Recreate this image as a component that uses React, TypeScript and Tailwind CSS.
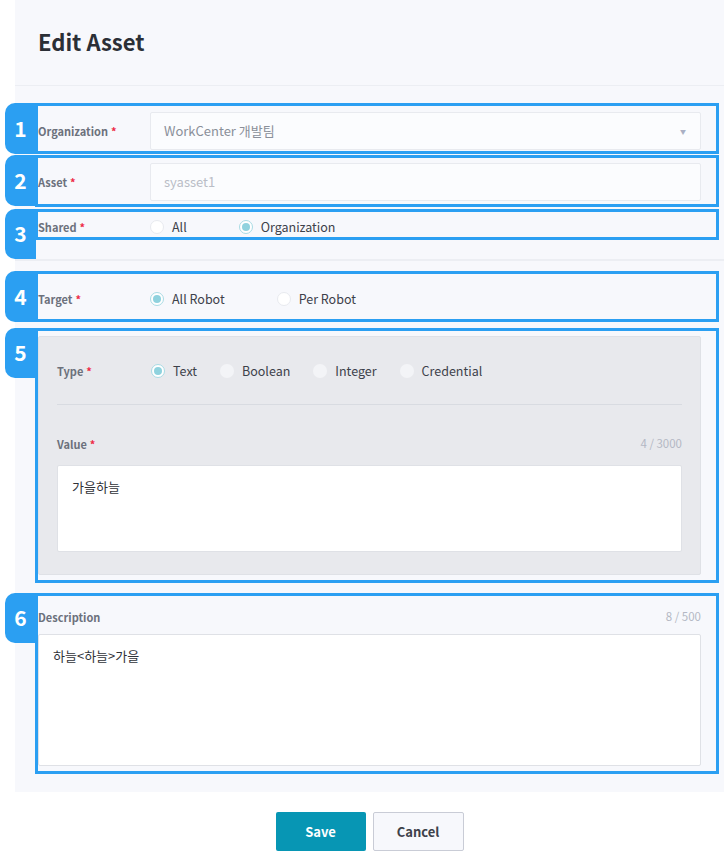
import React from "react";

const font = { fontFamily: '"Noto Sans CJK KR", "Noto Sans", sans-serif' };

function Req() {
  return <span className="ml-[3px] text-[#ee2b47]">*</span>;
}

function Radio({ checked, muted }: { checked?: boolean; muted?: boolean }) {
  if (checked) {
    return (
      <span className="flex h-[14px] w-[14px] shrink-0 items-center justify-center rounded-full border border-[#a9dbe4] bg-white">
        <span className="h-[8px] w-[8px] rounded-full bg-[#8fd2de]" />
      </span>
    );
  }
  return (
    <span
      className={
        muted
          ? "h-[14px] w-[14px] shrink-0 rounded-full bg-[#f3f4f7]"
          : "h-[14px] w-[14px] shrink-0 rounded-full border border-[#e8eaef] bg-white"
      }
    />
  );
}

function Option({ label, checked, muted, gap }: { label: string; checked?: boolean; muted?: boolean; gap: string }) {
  return (
    <label className={`flex items-center ${gap}`}>
      <Radio checked={checked} muted={muted} />
      <span className="ml-[8px] text-[12.5px] text-[#3d414a]">{label}</span>
    </label>
  );
}

function Annot({ box, badge, n }: { box: string; badge: string; n: number }) {
  return (
    <>
      <div className={`pointer-events-none absolute left-[35px] w-[684px] border-[3px] border-[#2b9ff2] ${box}`} />
      <div
        className={`pointer-events-none absolute left-[5px] flex w-[31px] items-center justify-center rounded-l-[10px] bg-[#2b9ff2] text-[21px] font-bold text-white ${badge}`}
      >
        {n}
      </div>
    </>
  );
}

export default function App() {
  return (
    <div className="relative min-h-[865px] w-[724px] bg-white" style={font}>
      <div className="ml-[15px] bg-[#f7f8fc]">
        {/* Header */}
        <div className="flex h-[86px] items-center border-b border-[#eceef3] pb-[2px] pl-[23px]">
          <h1 className="text-[22px] font-bold text-[#2b2f36]">Edit Asset</h1>
        </div>

        {/* Section 1 */}
        <div className="border-b-2 border-[#eceef3] px-[23px] pb-[22px] pt-[26px]">
          <div className="flex h-[38px] items-center">
            <div className="w-[112px] text-[11px] font-bold text-[#6c717c]">
              Organization
              <Req />
            </div>
            <div className="flex h-[38px] flex-1 items-center justify-between rounded-[2px] border border-[#e8eaef] bg-[#fbfcfe] pl-[13px] pr-[14px]">
              <span className="text-[13px] text-[#8a8f99]">WorkCenter 개발팀</span>
              <span className="text-[6px] text-[#aab0c4]">▼</span>
            </div>
          </div>
          <div className="mt-[13px] flex h-[38px] items-center">
            <div className="w-[112px] text-[11px] font-bold text-[#6c717c]">
              Asset
              <Req />
            </div>
            <div className="flex h-[38px] flex-1 items-center rounded-[2px] border border-[#e8eaef] bg-[#fbfcfe] pl-[13px]">
              <span className="text-[13px] text-[#b9bdc6]">syasset1</span>
            </div>
          </div>
          <div className="mt-[16px] flex h-[20px] items-center">
            <div className="w-[112px] text-[11px] font-bold text-[#6c717c]">
              Shared
              <Req />
            </div>
            <Option label="All" gap="mr-[52px]" />
            <Option label="Organization" checked gap="mr-[52px]" />
          </div>
        </div>

        {/* Section 2 */}
        <div className="px-[23px] pb-[26px] pt-[28px]">
          <div className="flex h-[20px] items-center">
            <div className="w-[112px] text-[11px] font-bold text-[#6c717c]">
              Target
              <Req />
            </div>
            <Option label="All Robot" checked gap="mr-[52px]" />
            <Option label="Per Robot" gap="mr-[52px]" />
          </div>

          <div className="mt-[27px] rounded-[2px] border border-[#dfe1e6] bg-[#e8e9ed] px-[18px] pb-[22px] pt-[24px]">
            <div className="flex h-[20px] items-center">
              <div className="w-[94px] text-[11px] font-bold text-[#6c717c]">
                Type
                <Req />
              </div>
              <Option label="Text" checked gap="mr-[23px]" />
              <Option label="Boolean" muted gap="mr-[23px]" />
              <Option label="Integer" muted gap="mr-[23px]" />
              <Option label="Credential" muted gap="mr-[23px]" />
            </div>
            <div className="mt-[23px] h-px bg-[#d8dbe1]" />
            <div className="mt-[31px] flex h-[16px] items-center justify-between">
              <div className="text-[11px] font-bold text-[#6c717c]">
                Value
                <Req />
              </div>
              <span className="text-[11.5px] text-[#b4b8c4]">4 / 3000</span>
            </div>
            <div className="mt-[13px] h-[87px] rounded-[2px] border border-[#dfe1e6] bg-white px-[14px] pt-[11px] text-[13px] text-[#2f3238]">
              가을하늘
            </div>
          </div>

          <div className="mt-[34px] flex h-[16px] items-center justify-between">
            <div className="text-[11px] font-bold text-[#6c717c]">Description</div>
            <span className="text-[11.5px] text-[#b4b8c4]">8 / 500</span>
          </div>
          <div className="mt-[9px] h-[132px] rounded-[2px] border border-[#dfe1e6] bg-white px-[14px] pt-[11px] text-[13px] text-[#2f3238]">
            {"하늘<하늘>가을"}
          </div>
        </div>
      </div>

      {/* Footer */}
      <div className="ml-[15px] flex justify-center gap-[7px] pt-[20px]">
        <button className="h-[39px] w-[90px] rounded-[2px] bg-[#0796b4] text-[13px] font-bold text-white">Save</button>
        <button className="h-[39px] w-[91px] rounded-[2px] border border-[#c9ccd6] bg-[#f7f8fc] text-[13px] font-bold text-[#3d414a]">
          Cancel
        </button>
      </div>

      {/* Annotations */}
      <Annot n={1} box="top-[103px] h-[51px]" badge="top-[103px] h-[51px]" />
      <Annot n={2} box="top-[155px] h-[52px]" badge="top-[155px] h-[51px]" />
      <Annot n={3} box="top-[209px] h-[31px]" badge="top-[209px] h-[50px]" />
      <Annot n={4} box="top-[271px] h-[51px]" badge="top-[271px] h-[51px]" />
      <Annot n={5} box="top-[328px] h-[255px]" badge="top-[328px] h-[50px]" />
      <Annot n={6} box="top-[593px] h-[181px]" badge="top-[593px] h-[50px]" />
    </div>
  );
}
